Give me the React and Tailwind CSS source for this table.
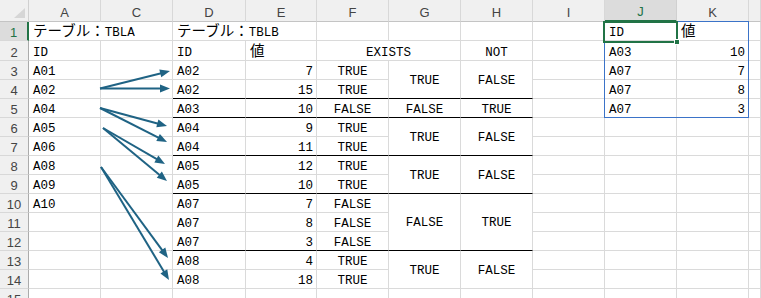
import React from 'react';

// rows whose bottom edge gets the heavy rule inside the D:H block
const RULE_ROWS = [4, 5, 7, 9, 12];

const COL_LETTERS = ['A', 'C', 'D', 'E', 'F', 'G', 'H', 'I', 'J', 'K', ''];

const SPAN_COL = { 1: '', 2: 'col-span-2' };
const SPAN_ROW = { 1: '', 2: 'row-span-2', 3: 'row-span-3' };

const ALIGN = {
  l: 'justify-start pl-[4px]',
  r: 'justify-end pr-[3px]',
  c: 'justify-center',
};

const Jp = ({ children }) => (
  <span className="font-['Noto_Sans_CJK_JP',sans-serif] text-[14.5px]">{children}</span>
);

const e = () => ({ v: '' });
const l = (v, o = {}) => ({ v, a: 'l', ...o });
const r = (v, o = {}) => ({ v, a: 'r', ...o });
const c = (v, o = {}) => ({ v, a: 'c', ...o });

// t: cell belongs to the bordered TBLB block (D:H)
const sheet = [
  [l(<><Jp>テーブル：</Jp>TBLA</>, { cs: 2 }), l(<><Jp>テーブル：</Jp>TBLB</>, { cs: 2 }), e(), e(), e(), e(), l('ID', { sel: true }), l(<Jp>値</Jp>), e()],
  [l('ID'), e(), l('ID'), l(<Jp>値</Jp>), c('EXISTS', { cs: 2 }), c('NOT'), e(), l('A03'), r('10'), e()],
  [l('A01'), e(), l('A02', { t: 1 }), r('7', { t: 1 }), c('TRUE', { t: 1 }), c('TRUE', { t: 1, rs: 2 }), c('FALSE', { t: 1, rs: 2 }), e(), l('A07'), r('7'), e()],
  [l('A02'), e(), l('A02', { t: 1 }), r('15', { t: 1 }), c('TRUE', { t: 1 }), e(), l('A07'), r('8'), e()],
  [l('A04'), e(), l('A03', { t: 1 }), r('10', { t: 1 }), c('FALSE', { t: 1 }), c('FALSE', { t: 1 }), c('TRUE', { t: 1 }), e(), l('A07'), r('3'), e()],
  [l('A05'), e(), l('A04', { t: 1 }), r('9', { t: 1 }), c('TRUE', { t: 1 }), c('TRUE', { t: 1, rs: 2 }), c('FALSE', { t: 1, rs: 2 }), e(), e(), e(), e()],
  [l('A06'), e(), l('A04', { t: 1 }), r('11', { t: 1 }), c('TRUE', { t: 1 }), e(), e(), e(), e()],
  [l('A08'), e(), l('A05', { t: 1 }), r('12', { t: 1 }), c('TRUE', { t: 1 }), c('TRUE', { t: 1, rs: 2 }), c('FALSE', { t: 1, rs: 2 }), e(), e(), e(), e()],
  [l('A09'), e(), l('A05', { t: 1 }), r('10', { t: 1 }), c('TRUE', { t: 1 }), e(), e(), e(), e()],
  [l('A10'), e(), l('A07', { t: 1 }), r('7', { t: 1 }), c('FALSE', { t: 1 }), c('FALSE', { t: 1, rs: 3 }), c('TRUE', { t: 1, rs: 3 }), e(), e(), e(), e()],
  [e(), e(), l('A07', { t: 1 }), r('8', { t: 1 }), c('FALSE', { t: 1 }), e(), e(), e(), e()],
  [e(), e(), l('A07', { t: 1 }), r('3', { t: 1 }), c('FALSE', { t: 1 }), e(), e(), e(), e()],
  [e(), e(), l('A08', { t: 1 }), r('4', { t: 1 }), c('TRUE', { t: 1 }), c('TRUE', { t: 1, rs: 2 }), c('FALSE', { t: 1, rs: 2 }), e(), e(), e(), e()],
  [e(), e(), l('A08', { t: 1 }), r('18', { t: 1 }), c('TRUE', { t: 1 }), e(), e(), e(), e()],
  [e(), e(), e(), e(), e(), e(), e(), e(), e(), e(), e()],
];

// [from x, from y, tip x, tip y]
const ARROWS = [
  [100, 88.5, 170, 71],
  [100, 88.5, 170, 88.5],
  [100, 108, 167, 126],
  [100, 108, 167, 142],
  [103, 128, 165, 164],
  [103, 128, 167, 181],
  [101, 167, 168, 258],
  [101, 167, 169, 280],
];

const Arrow = ({ x1, y1, x2, y2 }) => {
  const dx = x2 - x1;
  const dy = y2 - y1;
  const len = Math.hypot(dx, dy);
  const ux = dx / len;
  const uy = dy / len;
  const head = 10;
  const half = 4;
  const bx = x2 - ux * head;
  const by = y2 - uy * head;
  const pts = [
    `${x2},${y2}`,
    `${bx - uy * half},${by + ux * half}`,
    `${bx + uy * half},${by - ux * half}`,
  ].join(' ');
  return (
    <g>
      <line x1={x1} y1={y1} x2={bx + ux * 2} y2={by + uy * 2} stroke="#1f6384" strokeWidth="2" />
      <polygon points={pts} fill="#1f6384" />
    </g>
  );
};

const Cell = ({ cell, row }) => {
  const cs = cell.cs || 1;
  const rs = cell.rs || 1;
  const ruled = cell.t && RULE_ROWS.includes(row + rs - 1);
  const merged = rs > 1;
  return (
    <div
      className={`relative flex whitespace-nowrap border-r border-b border-r-[#dadada] ${
        ruled ? 'border-b-black' : 'border-b-[#dadada]'
      } ${SPAN_COL[cs]} ${SPAN_ROW[rs]} ${ALIGN[cell.a || 'l']} ${merged ? 'items-center pt-[2px]' : 'items-end'}`}
    >
      <span className="leading-[14px]">{cell.v}</span>
    </div>
  );
};

export default function App() {
  return (
    <div className="relative h-[298px] w-[761px] overflow-hidden bg-white font-['Liberation_Mono','Noto_Sans_CJK_JP',monospace] text-[12.5px] text-black">
      <div className="relative grid grid-cols-[29px_72px_72px_73px_71px_72px_72px_72px_72px_72px_72px_1fr] grid-rows-[22px_19px_20px_repeat(12,19px)_19px]">
        {/* corner */}
        <div className="relative border-r border-b border-r-[#d0d0d0] border-b-[#c4c4c4] bg-[#f0f0f0]">
          <svg className="absolute right-[3px] bottom-[3px]" width="11" height="10" viewBox="0 0 11 10">
            <polygon points="11,0 11,10 0,10" fill="#d6d6d6" />
          </svg>
        </div>
        {/* column headers */}
        {COL_LETTERS.map((ch, i) =>
          ch === 'J' ? (
            <div
              key={i}
              className="flex items-end justify-center border-r border-b-2 border-r-[#d0d0d0] border-b-[#217346] bg-[#dcdcdc] pb-[1px] font-['Liberation_Sans',sans-serif] text-[13px] leading-[15px] text-[#217346]"
            >
              {ch}
            </div>
          ) : (
            <div
              key={i}
              className="flex items-end justify-center border-r border-b border-r-[#d8d8d8] border-b-[#c4c4c4] bg-[#f0f0f0] pb-[1px] font-['Liberation_Sans',sans-serif] text-[13px] leading-[15px] text-[#444]"
            >
              {ch}
            </div>
          )
        )}
        {sheet.map((cells, ri) => {
          const row = ri + 1;
          return (
            <React.Fragment key={row}>
              {row === 1 ? (
                <div className="flex items-end justify-center border-r-2 border-b border-r-[#217346] border-b-[#d8d8d8] bg-[#dcdcdc] font-['Liberation_Sans',sans-serif] text-[13px] leading-[15px] text-[#217346]">
                  {row}
                </div>
              ) : (
                <div className="flex items-end justify-center border-r border-b border-r-[#ababab] border-b-[#d8d8d8] bg-[#f0f0f0] font-['Liberation_Sans',sans-serif] text-[13px] leading-[15px] text-[#444]">
                  {row}
                </div>
              )}
              {cells.map((cell, ci) => (
                <Cell key={ci} cell={cell} row={row} />
              ))}
            </React.Fragment>
          );
        })}

        {/* highlighted range J1:K5 */}
        <div className="pointer-events-none absolute col-start-10 col-end-12 row-start-2 row-end-7 -top-px -left-px right-0 bottom-0 border border-[#3b73c8]" />
        {/* active cell J1 */}
        <div className="pointer-events-none absolute col-start-10 col-end-11 row-start-2 row-end-3 -top-[1px] -left-[2px] -right-[1px] -bottom-[2px] border-2 border-[#217346]">
          <div className="absolute -right-[4px] -bottom-[4px] h-[6px] w-[6px] border border-white bg-[#217346]" />
        </div>
      </div>

      {/* lookup arrows from TBLA to TBLB */}
      <svg className="pointer-events-none absolute inset-0" width="761" height="298" viewBox="0 0 761 298">
        {ARROWS.map(([x1, y1, x2, y2], i) => (
          <Arrow key={i} x1={x1} y1={y1} x2={x2} y2={y2} />
        ))}
      </svg>
    </div>
  );
}
